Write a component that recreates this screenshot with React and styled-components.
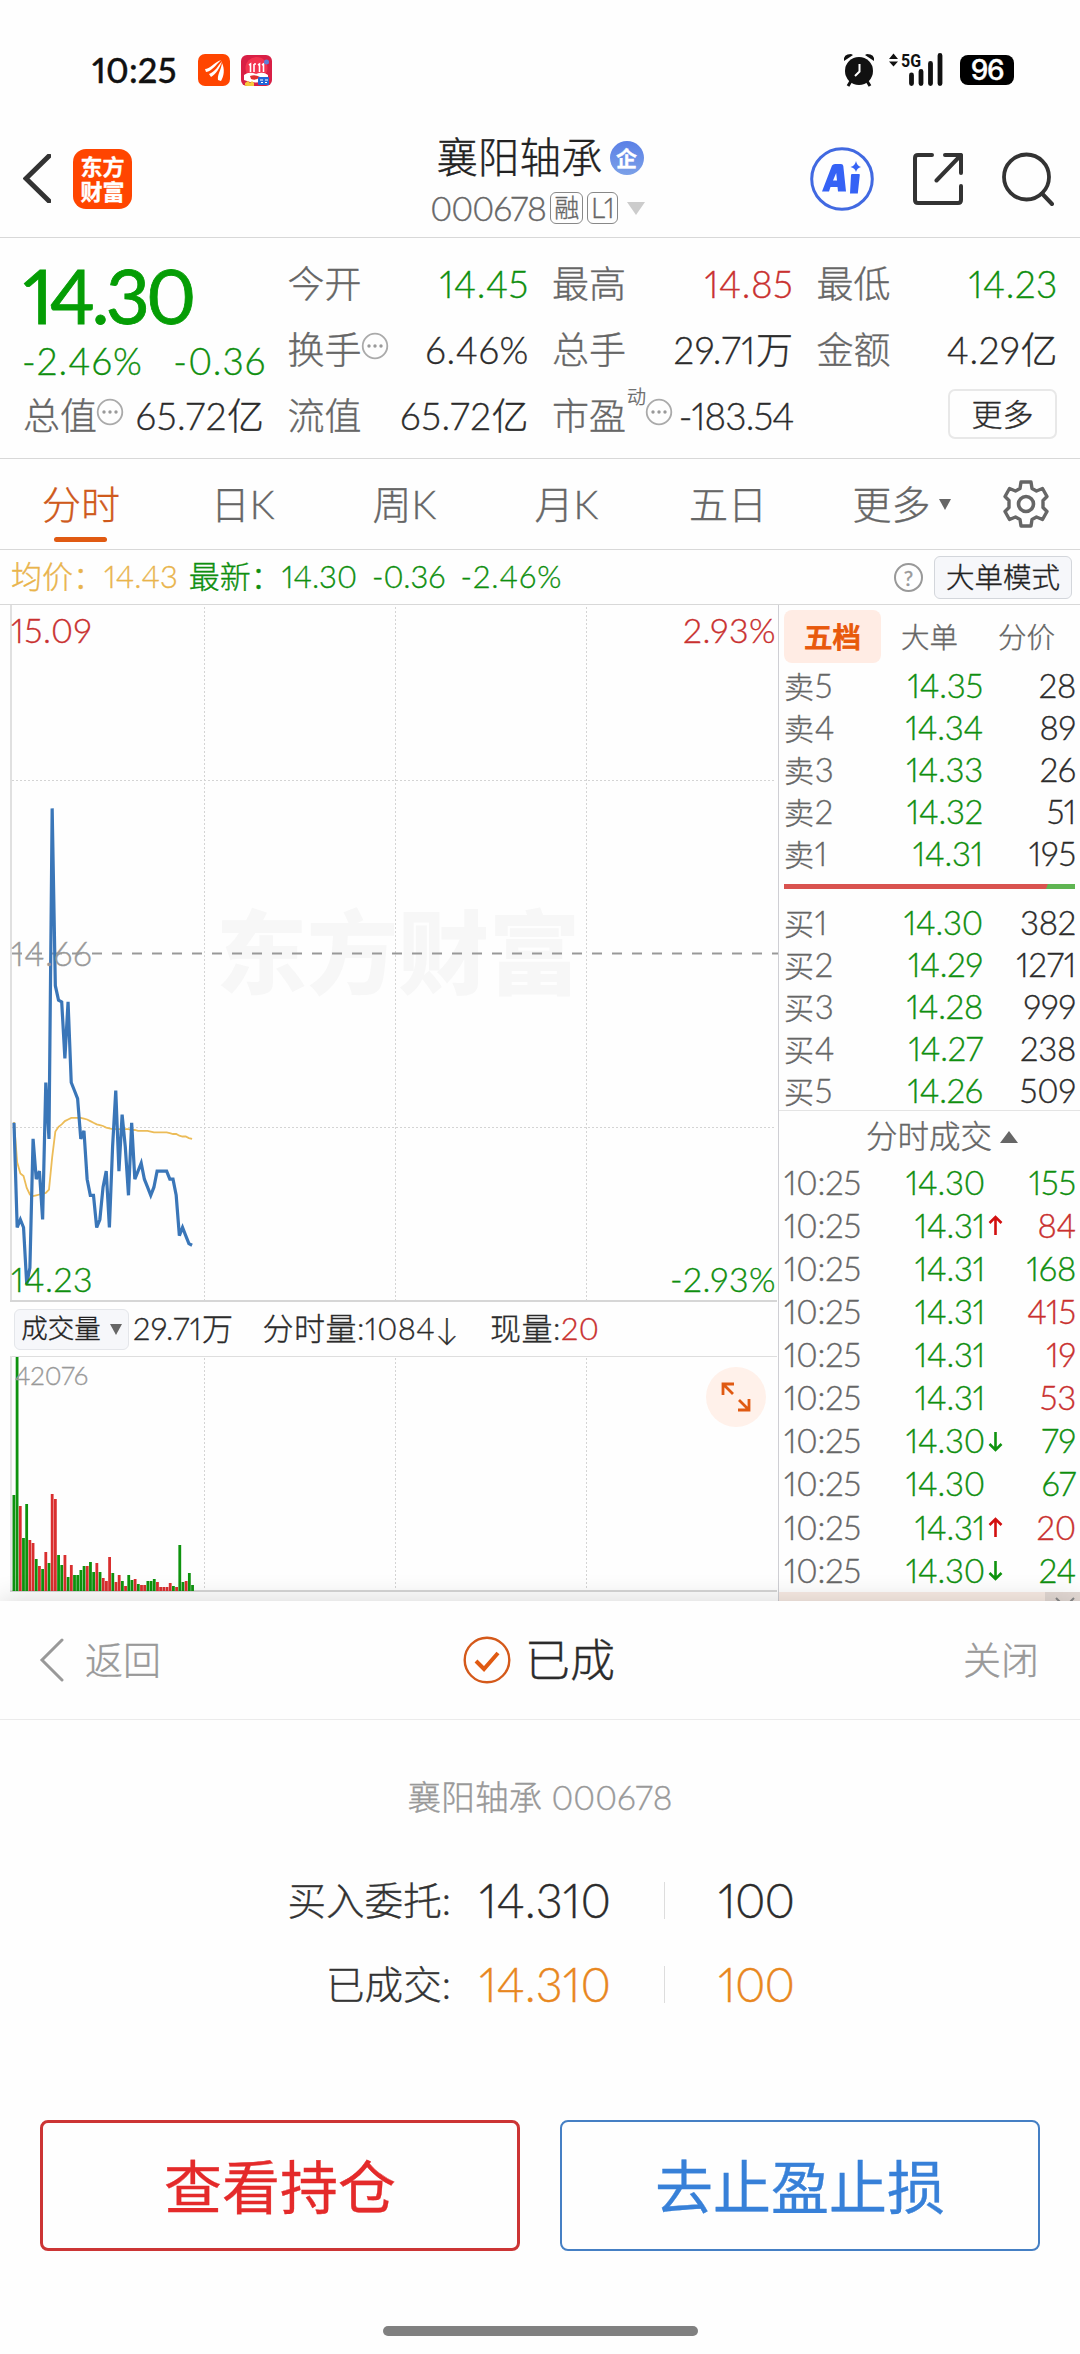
import React from "react";
import styled, { createGlobalStyle } from "styled-components";

const RED = "#c9302f";
const GREEN = "#0f8f0f";
const ORANGE = "#e05a12";
const LINE = "#d8d8d8";

const tones = {
  up: RED,
  down: GREEN,
  dark: "#2b2b2b",
  gray: "#666",
};

const GlobalStyle = createGlobalStyle`
  * {
    box-sizing: border-box;
  }
  body {
    margin: 0;
    background-color: #fefefe;
    font-family: Lato, "Noto Sans CJK SC", sans-serif;
    font-weight: 300;
    font-variant-numeric: proportional-nums;
    -webkit-text-stroke-width: 0.35px;
    color: #2b2b2b;
  }
  svg {
    display: block;
    flex-shrink: 0;
  }
`;

const Screen = styled.div`
  width: 1080px;
  height: 2354px;
  display: flex;
  flex-direction: column;
  overflow: hidden;
  line-height: 1.2;
  white-space: nowrap;
`;

/* status bar */

const StatusBar = styled.div`
  height: 105px;
  padding: 35px 66px 0 92px;
  display: flex;
  justify-content: space-between;
  align-items: flex-start;
`;

const StatusGroup = styled.div`
  height: 70px;
  display: flex;
  align-items: center;
  gap: ${(props) => props.gap}px;
`;

const Clock = styled.span`
  width: 95px;
  font-size: 34.5px;
  font-weight: 500;
  letter-spacing: 0.2px;
  color: #111;
`;

const Battery = styled.div`
  width: 54px;
  height: 30px;
  margin-left: 3px;
  border-radius: 8px;
  background-color: #000;
  color: #fff;
  font: 500 28px/31px Inter, sans-serif;
  letter-spacing: -1.5px;
  text-align: center;
`;

/* header */

const Header = styled.header`
  height: 133px;
  padding: 0 26px 0 23px;
  display: grid;
  grid-template-columns: 1fr auto 1fr;
  align-items: center;
  border-bottom: 1px solid ${LINE};
`;

const HeaderSide = styled.div`
  display: flex;
  align-items: center;
  gap: ${(props) => props.gap}px;
  justify-content: ${(props) => (props.end ? "flex-end" : "flex-start")};
  padding-top: 15px;
`;

const BrandMark = styled.div`
  width: 59px;
  height: 60px;
  padding-top: 5px;
  border-radius: 13px;
  background-color: #ff4500;
  color: #fff;
  font-weight: 700;
  font-size: 22px;
  line-height: 25px;
  text-align: center;
`;

const TitleBlock = styled.div`
  display: flex;
  flex-direction: column;
  align-items: center;
  padding: 17px 0 0 3px;
`;

const TitleRow = styled.div`
  height: 57px;
  display: flex;
  align-items: center;
  gap: 7px;
  font-size: 41.5px;
  color: #222;
`;

const CompanyBadge = styled.span`
  width: 34px;
  height: 34px;
  border-radius: 50%;
  background: linear-gradient(#5b80e6, #7ba0e8);
  color: #fff;
  font-size: 21px;
  font-weight: 700;
  line-height: 33px;
  text-align: center;
`;

const CodeRow = styled.div`
  display: flex;
  align-items: center;
  height: 44px;
  margin-right: 5px;
  gap: 4px;
  font-size: 34px;
  letter-spacing: -1.1px;
  color: #666;
`;

const Tag = styled.span`
  width: ${(props) => props.width}px;
  height: 32px;
  border: 1px solid #888;
  border-radius: 6px;
  font-size: ${(props) => props.size}px;
  line-height: 29px;
  text-align: center;
`;

const Caret = styled.span`
  width: 0;
  height: 0;
  border-style: solid;
  border-width: ${(props) =>
    props.up
      ? `0 ${props.w / 2}px ${props.h}px`
      : `${props.h}px ${props.w / 2}px 0`};
  border-color: ${(props) => props.color} transparent;
  margin-left: ${(props) => props.gap || 0}px;
`;

/* quote summary */

const Quote = styled.section`
  height: 221px;
  padding: 13px 23px 0;
  display: grid;
  grid-template-columns: repeat(4, 1fr);
  grid-template-rows: repeat(3, 66px);
  column-gap: 24px;
  border-bottom: 1px solid ${LINE};
`;

const PriceBlock = styled.div`
  grid-row: span 2;
  color: ${GREEN};
`;

const BigPrice = styled.div`
  height: 88px;
  line-height: 87px;
  font-size: 76.5px;
  font-weight: 400;
  letter-spacing: -3.8px;
  color: #059d05;
  -webkit-text-stroke-width: 0.8px;
`;

const Change = styled.div`
  height: 44px;
  margin: 0 -3px 0 -1px;
  display: flex;
  align-items: center;
  justify-content: space-between;
  font-size: 37px;
  letter-spacing: 1.1px;
`;

const Stat = styled.div`
  display: flex;
  align-items: center;
  font-size: 37px;
  color: #666;
`;

const Value = styled.span`
  margin: 0 -1px 0 auto;
  letter-spacing: ${(props) => (props.tight ? -0.9 : 0.6)}px;
  color: ${(props) => tones[props.tone]};
`;

const Sup = styled.sup`
  align-self: flex-start;
  margin-left: 1px;
  font-size: 19px;
  line-height: 28px;
`;

const MoreButton = styled.button`
  width: 109px;
  height: 50px;
  margin: 6px 0 0 auto;
  align-self: start;
  padding: 0;
  border: 2px solid #e8e8e8;
  border-radius: 7px;
  background: none;
  font: inherit;
  font-size: 31px;
  line-height: 44px;
  color: #2b2b2b;
`;

/* period tabs */

const Tabs = styled.nav`
  height: 91px;
  padding-right: 22px;
  display: grid;
  grid-template-columns: repeat(5, 161.8px) 1fr 64px;
  border-bottom: 1px solid ${LINE};
`;

const Tab = styled.div`
  display: flex;
  flex-direction: column;
  align-items: center;
  padding-top: 22px;
  font-size: 39px;
  color: ${(props) => (props.active ? "#cf5a1c" : "#666")};
  &::after {
    content: "";
    width: 53px;
    height: 5px;
    margin-top: 9px;
    border-radius: 3px;
    background-color: ${(props) => (props.active ? ORANGE : "transparent")};
  }
`;

const TabLabel = styled.span`
  display: flex;
  align-items: center;
`;

const TabIcon = styled.div`
  display: flex;
  justify-content: center;
  padding-top: 21px;
`;

/* average / latest line */

const InfoBar = styled.div`
  height: 55px;
  padding: 0 8px 0 11px;
  display: flex;
  align-items: center;
  border-bottom: 1px solid ${LINE};
  font-size: 31px;
  color: ${GREEN};
`;

const InfoItem = styled.span`
  margin-right: ${(props) => props.gap}px;
  letter-spacing: ${(props) => props.spacing || 0}px;
  color: ${(props) => props.color};
`;

const Help = styled.span`
  width: 29px;
  height: 29px;
  margin: 0 11px 0 auto;
  border: 2px solid #999;
  border-radius: 50%;
  color: #999;
  font-size: 21px;
  font-weight: 400;
  line-height: 25px;
  text-align: center;
`;

const ModeButton = styled.button`
  width: 138px;
  height: 43px;
  padding: 0;
  border: 1px solid #d3d6db;
  border-radius: 6px;
  background-color: #f6f7fa;
  font: inherit;
  font-size: 28.5px;
  line-height: 38px;
  color: #222;
`;

/* chart and order book */

const Main = styled.main`
  height: 996px;
  display: flex;
`;

const ChartColumn = styled.div`
  width: 778px;
`;

const VolumeBar = styled.div`
  height: 54px;
  padding-left: 14px;
  display: flex;
  align-items: center;
  font-size: 31px;
`;

const VolumeButton = styled.button`
  width: 115px;
  height: 41px;
  margin-right: 4px;
  padding: 0;
  display: flex;
  align-items: center;
  justify-content: center;
  border: 1px solid #e4e6ea;
  border-radius: 6px;
  background-color: #f6f7fa;
  font: inherit;
  font-size: 26.5px;
  color: #222;
`;

const VolumeText = styled.span`
  margin-right: ${(props) => props.gap || 0}px;
  letter-spacing: 0.5px;
  color: ${(props) => tones[props.tone || "dark"]};
`;

const VolumeChart = styled.div`
  position: relative;
`;

const ExpandButton = styled.div`
  position: absolute;
  top: 11px;
  right: 12px;
  width: 60px;
  height: 60px;
  padding: 15px;
  border-radius: 50%;
  background-color: #fff1ea;
`;

const Book = styled.aside`
  flex: 1;
  height: 996px;
  display: flex;
  flex-direction: column;
  border-left: 1px solid #cfcfd4;
`;

const BookTabs = styled.div`
  height: 60px;
  flex-shrink: 0;
  padding: 5px 0 0 5px;
  display: flex;
`;

const BookTab = styled.span`
  width: 97px;
  height: 53px;
  border-radius: 8px;
  background-color: ${(props) => (props.active ? "#ffece4" : "transparent")};
  color: ${(props) => (props.active ? "#e8590c" : "#666")};
  font-size: 28.5px;
  font-weight: ${(props) => (props.active ? 500 : 300)};
  -webkit-text-stroke-width: ${(props) => (props.active ? 0.9 : 0.35)}px;
  line-height: 55px;
  text-align: center;
`;

const BookRow = styled.div`
  height: ${(props) => props.height}px;
  flex-shrink: 0;
  padding: 0 4px 0 5px;
  display: flex;
  align-items: center;
  font-size: 33px;
  letter-spacing: -0.2px;
  color: #666;
`;

const SideMark = styled.span`
  margin-right: 1px;
  font-size: 30px;
`;

const Cell = styled.span`
  width: ${(props) => props.width}px;
  margin-left: ${(props) => (props.push ? "auto" : 0)};
  text-align: right;
  color: ${(props) => tones[props.tone]};
`;

const ArrowSlot = styled.span`
  width: 20px;
  padding-left: 3px;
`;

const Ratio = styled.div`
  height: 5px;
  flex-shrink: 0;
  margin: 9px 5px 13px;
  background: linear-gradient(110deg, #d9534f 90%, #5fb552 90.2%);
`;

const TicksTitle = styled.div`
  height: 51px;
  flex-shrink: 0;
  margin-top: -2px;
  padding: 2px 0 0 25px;
  display: flex;
  align-items: center;
  justify-content: center;
  border-top: 1px solid #e4e4e4;
  font-size: 31.5px;
  color: #666;
`;

const Promo = styled.div`
  flex: 1;
  display: flex;
  justify-content: flex-end;
  overflow: hidden;
  background-color: #f8ebe4;
`;

const PromoClose = styled.div`
  width: 35px;
  padding: 5px 0 0 10px;
  background-color: #e3d9d4;
`;

/* order result sheet */

const Sheet = styled.section`
  flex: 1;
  position: relative;
  display: flex;
  flex-direction: column;
  background-color: #fefefe;
  box-shadow: 0 0 26px rgba(0, 0, 0, 0.16);
`;

const SheetHeader = styled.div`
  height: 119px;
  padding: 0 41px 0 39px;
  display: grid;
  grid-template-columns: 1fr auto 1fr;
  align-items: center;
  border-bottom: 1px solid #ebebeb;
  font-size: 38px;
  color: #999;
`;

const SheetSide = styled.div`
  display: flex;
  align-items: center;
  gap: 21px;
  justify-content: ${(props) => (props.end ? "flex-end" : "flex-start")};
`;

const SheetTitle = styled.div`
  display: flex;
  align-items: center;
  gap: 14px;
  font-size: 45px;
  color: #2b2b2b;
`;

const StockName = styled.div`
  margin-top: 57px;
  text-align: center;
  font-size: 33.7px;
  line-height: 40px;
  color: #999;
`;

const OrderLines = styled.div`
  margin-top: 41px;
`;

const OrderLine = styled.div`
  height: 84px;
  display: grid;
  grid-template-columns: 451px 213px 1px 1fr;
  align-items: center;
  font-size: 47px;
  color: ${(props) => props.color};
`;

const OrderLabel = styled.span`
  text-align: right;
  font-size: 38.6px;
  color: #333;
`;

const OrderPrice = styled.span`
  padding-left: 28px;
`;

const OrderSplit = styled.span`
  height: 37px;
  background-color: #ddd;
`;

const OrderCount = styled.span`
  padding-left: 53px;
  letter-spacing: -0.8px;
`;

const Actions = styled.div`
  margin-top: 94px;
  padding: 0 40px;
  display: grid;
  grid-template-columns: 1fr 1fr;
  gap: 40px;
`;

const ActionButton = styled.button`
  height: 131px;
  padding: 3px 0 0;
  border: ${(props) => props.stroke}px solid ${(props) => props.line};
  border-radius: 8px;
  background: none;
  font: inherit;
  font-size: 58px;
  font-weight: 400;
  color: ${(props) => props.color};
`;

const HomeBar = styled.div`
  width: 315px;
  height: 10px;
  margin: 75px auto 0;
  border-radius: 5px;
  background-color: #808080;
`;

const ChartText = styled.text`
  font-size: ${(props) => props.$size || 34}px;
  letter-spacing: ${(props) => (props.$size ? 0 : 0.5)}px;
  fill: ${(props) => props.$color};
  stroke: ${(props) => props.$color};
  stroke-width: 0.35px;
`;

const Watermark = styled.text`
  font-size: 91px;
  font-weight: 900;
  fill: #f7f7f7;
`;

/* data */

const sells = [
  ["卖", 5, "14.35", 28],
  ["卖", 4, "14.34", 89],
  ["卖", 3, "14.33", 26],
  ["卖", 2, "14.32", 51],
  ["卖", 1, "14.31", 195],
];

const buys = [
  ["买", 1, "14.30", 382],
  ["买", 2, "14.29", 1271],
  ["买", 3, "14.28", 999],
  ["买", 4, "14.27", 238],
  ["买", 5, "14.26", 509],
];

const ticks = [
  { price: "14.30", count: 155, tone: "down" },
  { price: "14.31", count: 84, tone: "up", move: "up" },
  { price: "14.31", count: 168, tone: "down" },
  { price: "14.31", count: 415, tone: "up" },
  { price: "14.31", count: 19, tone: "up" },
  { price: "14.31", count: 53, tone: "up" },
  { price: "14.30", count: 79, tone: "down", move: "down" },
  { price: "14.30", count: 67, tone: "down" },
  { price: "14.31", count: 20, tone: "up", move: "up" },
  { price: "14.30", count: 24, tone: "down", move: "down" },
];

// one value per minute since the open
const prices = [
  14.45, 14.32, 14.33, 14.32, 14.25, 14.27, 14.43, 14.38, 14.39, 14.33, 14.5,
  14.43, 14.84, 14.62, 14.602, 14.6, 14.53, 14.6, 14.5, 14.49, 14.48, 14.43,
  14.44, 14.38, 14.36, 14.36, 14.32, 14.33, 14.37, 14.39, 14.32, 14.42, 14.49,
  14.39, 14.46, 14.42, 14.36, 14.45, 14.38, 14.39, 14.4, 14.38, 14.37, 14.36,
  14.37, 14.39, 14.39, 14.39, 14.39, 14.38, 14.38, 14.36, 14.31, 14.32, 14.31,
  14.3, 14.298,
];

const averages = [
  14.451, 14.401, 14.387, 14.384, 14.369, 14.361, 14.359, 14.36, 14.361,
  14.362, 14.363, 14.367, 14.407, 14.439, 14.445, 14.448, 14.452, 14.454,
  14.456, 14.456, 14.456, 14.456, 14.455, 14.454, 14.452, 14.45, 14.448,
  14.447, 14.446, 14.444, 14.443, 14.442, 14.442, 14.442, 14.442, 14.442,
  14.442, 14.441, 14.441, 14.44, 14.44, 14.44, 14.44, 14.439, 14.438, 14.438,
  14.438, 14.438, 14.438, 14.437, 14.436, 14.436, 14.434, 14.433, 14.433,
  14.431, 14.43,
];

const volumes = [
  96, 234, 85, 53, 87, 51, 48, 32, 25, 22, 39, 28, 97, 92, 36, 26, 36, 14, 26,
  16, 16, 21, 25, 25, 29, 19, 28, 19, 13, 10, 34, 18, 9, 16, 10, 5, 16, 11, 12,
  7, 6, 6, 10, 10, 12, 9, 4, 4, 4, 8, 5, 4, 46, 9, 10, 18, 6,
];
const volumeSides = "ggrggrrgrgrgrrggrgrggggrggrgrrrgrrgrggrgrrgggrrrrrgrggrggr";

const minuteX = (i) => 14 + i * 3.18;
const priceY = (price) => 348.5 + (14.66 - price) * 806;
const toPoints = (list) =>
  list.map((price, i) => `${minuteX(i)},${priceY(price).toFixed(1)}`).join(" ");

/* drawings */

const AlarmIcon = () => (
  <svg width="32" height="34" viewBox="0 0 32 34">
    <circle cx="16" cy="18" r="14" fill="#111" />
    <path d="M1 8Q0 1 8 1L10 2Z M31 8Q32 1 24 1L22 2Z" fill="#111" />
    <path d="M8 28L5 33M24 28L27 33" stroke="#111" strokeWidth="3" />
    <path d="M16.5 11V18.5L12 23" fill="none" stroke="#fff" strokeWidth="2" />
  </svg>
);

const SignalIcon = () => (
  <svg width="54" height="40" viewBox="0 -3 54 40">
    <path d="M0 6L4.500 0.500L9 6Z M0 8.500L4.500 13.500L9 8.500Z" fill="#111" />
    <text
      x="12"
      y="13.500"
      fontSize="19"
      fontWeight="700"
      fontFamily="Roboto, sans-serif"
      textLength="20"
      lengthAdjust="spacingAndGlyphs"
      fill="#111"
    >
      5G
    </text>
    <path
      d="M22.500 22V30.500M32 18.500V30.500M41.500 10.500V30.500M51 2.500V30.500"
      stroke="#111"
      strokeWidth="4.8"
      strokeLinecap="round"
    />
  </svg>
);

const LeafAppIcon = () => (
  <svg width="32" height="32" viewBox="0 0 32 32">
    <rect width="32" height="32" rx="7" fill="#ff4500" />
    <path
      d="M7 15C12 15 15 9 23 6C18 11 14 17 8 18Z M11 20C17 18 20 12 24 7C22 14 18 20 13 23Z M20 26C19 21 23 16 24 9C27 15 26 22 23 27Z"
      fill="#fff"
    />
  </svg>
);

const ShopAppIcon = () => (
  <svg width="31" height="31" viewBox="0 0 31 31">
    <defs>
      <clipPath id="shop">
        <rect width="31" height="31" rx="6" />
      </clipPath>
    </defs>
    <g clipPath="url(#shop)">
      <rect width="31" height="31" fill="#d81f45" />
      <circle cx="15.5" cy="13" r="11" fill="#f2334f" />
      <path
        d="M8 10L9.500 9V17M13 9V17M13 9H15M17 10L18.500 9V17M21 10L22.500 9V17"
        fill="none"
        stroke="#fff"
        strokeWidth="1.6"
      />
      <path d="M3 20Q8 16 15 19Q22 16 27 20V25Q15 30 3 25Z" fill="#fff" />
      <path d="M9 21Q14 19 19 22Q15 26 10 24Z" fill="#e0302f" />
      <path d="M4 31V28L7 26L9 28L11 26L13 28V31Z" fill="#f5c93c" />
      <rect x="17" y="22" width="11" height="8" rx="1" fill="#2166d8" />
      <path d="M19 25H22M24 25H27M20 27.500H22M24 27.500H26" stroke="#fff" />
      <circle cx="25.5" cy="7" r="2.5" fill="#5b7fd8" />
    </g>
  </svg>
);

const BackIcon = ({ w, h, color, stroke }) => (
  <svg width={w} height={h} viewBox={`0 0 ${w} ${h}`}>
    <path
      d={`M${w - 2} 2L3 ${h / 2}L${w - 2} ${h - 2}`}
      fill="none"
      stroke={color}
      strokeWidth={stroke}
      strokeLinecap="round"
    />
  </svg>
);

const AiIcon = () => (
  <svg width="64" height="66" viewBox="0 0 64 66">
    <circle cx="32" cy="33" r="30.3" fill="none" stroke="#4169e1" strokeWidth="3" />
    <path
      fill="#3562f5"
      fillRule="evenodd"
      d="M12 45.500L22 19.500Q23 18 25 18H31Q33 18 33.300 20L36 45.500H28L27.500 41H20.500L19 45.500ZM23 34.500H27L26.200 27Z"
    />
    <path d="M42 28H49Q50 28 49.800 29L47.800 47.500H40L41 29Q41.200 28 42 28Z" fill="#3562f5" />
    <path d="M46 15Q47 20 51 21Q47 22 46 26Q45 22 40.500 21Q45 20 46 15Z" fill="#3562f5" />
  </svg>
);

const ShareIcon = () => (
  <svg width="50" height="52" viewBox="0 0 50 52">
    <path
      d="M19 2H5Q2 2 2 5V47Q2 50 5 50H45Q48 50 48 47V33M32 2H48V20M48 2L23.500 27.500"
      fill="none"
      stroke="#333"
      strokeWidth="4"
      strokeLinecap="round"
      strokeLinejoin="round"
    />
  </svg>
);

const SearchIcon = () => (
  <svg width="52" height="54" viewBox="0 0 52 54">
    <circle cx="24.500" cy="25" r="22.500" fill="none" stroke="#333" strokeWidth="3.800" />
    <path d="M40 41.500L50 52" stroke="#333" strokeWidth="4" strokeLinecap="round" />
  </svg>
);

const GearIcon = () => (
  <svg width="46" height="48" viewBox="-23 -24 46 48">
    <path
      d="M-5 -22H5L6 -15.500L10.500 -13L16.500 -15.500L21 -7.500L17 -3.500V3.500L21 7.500L16.500 15.500L10.500 13L6 15.500L5 22H-5L-6 15.500L-10.500 13L-16.500 15.500L-21 7.500L-17 3.500V-3.500L-21 -7.500L-16.500 -15.500L-10.500 -13L-6 -15.500Z"
      fill="none"
      stroke="#666"
      strokeWidth="3.400"
      strokeLinejoin="round"
    />
    <circle r="7.500" fill="none" stroke="#666" strokeWidth="3.600" />
  </svg>
);

const DotsSvg = styled.svg`
  margin: -8px 0 0 -1px;
`;

const DotsIcon = () => (
  <DotsSvg width="28" height="28" viewBox="0 0 28 28">
    <circle cx="14" cy="14" r="12.300" fill="none" stroke="#aaa" strokeWidth="1.800" />
    <circle cx="8" cy="14" r="1.700" fill="#999" />
    <circle cx="14" cy="14" r="1.700" fill="#999" />
    <circle cx="20" cy="14" r="1.700" fill="#999" />
  </DotsSvg>
);

const MoveArrow = ({ move }) => (
  <svg width="15" height="21" viewBox="0 0 15 21">
    <path
      d={move === "up" ? "M7.500 20V2M1.500 8L7.500 2L13.500 8" : "M7.500 1V19M1.500 13L7.500 19L13.500 13"}
      fill="none"
      stroke={move === "up" ? "#d20f0f" : "#0e930e"}
      strokeWidth="2.600"
    />
  </svg>
);

const ExpandIcon = () => (
  <svg width="30" height="30" viewBox="0 0 30 30">
    <path
      d="M2 13V2H13M2 2L12 12M28 17V28H17M28 28L18 18"
      fill="none"
      stroke={ORANGE}
      strokeWidth="2.800"
    />
  </svg>
);

const DoneIcon = () => (
  <svg width="48" height="48" viewBox="0 0 48 48">
    <circle cx="24" cy="24" r="22.300" fill="none" stroke="#d4591a" strokeWidth="2.400" />
    <path d="M13 25L21 33L35 17" fill="none" stroke="#e05a12" strokeWidth="4" />
  </svg>
);

const PriceChart = () => (
  <svg width="778" height="697" viewBox="0 0 778 697">
    <Watermark x="216" y="382">
      东方财富
    </Watermark>
    <g stroke="#d4d4d4" strokeWidth="1" strokeDasharray="2 2">
      <path d="M204.500 2V696M395.500 2V696M586.500 2V696" />
      <path d="M12 175.500H776M12 522.500H776" />
    </g>
    <path d="M11 0V696" stroke="#e0e0e0" strokeWidth="2" />
    <path d="M10 696H777" stroke="#d6d6d6" strokeWidth="2" />
    <path d="M12 348.500H778" stroke="#999" strokeWidth="2" strokeDasharray="10 10" />
    <polyline points={toPoints(averages)} fill="none" stroke="#ecbc58" strokeWidth="1.800" />
    <polyline points={toPoints(prices)} fill="none" stroke="#3a76b8" strokeWidth="3.200" />
    <ChartText x="11" y="38" $color={RED}>
      15.09
    </ChartText>
    <ChartText x="776" y="38" textAnchor="end" $color={RED}>
      2.93%
    </ChartText>
    <ChartText x="11" y="361" $color="#999">
      14.66
    </ChartText>
    <ChartText x="11" y="687" $color={GREEN}>
      14.23
    </ChartText>
    <ChartText x="776" y="687" textAnchor="end" $color={GREEN}>
      -2.93%
    </ChartText>
  </svg>
);

const VolumeBars = () => (
  <svg width="778" height="245" viewBox="0 0 778 245">
    <path d="M10 0.500H777" stroke="#dedede" />
    <path d="M11 0V235" stroke="#e4e4e4" strokeWidth="2" />
    <path
      d="M204.500 2V234M395.500 2V234M586.500 2V234"
      stroke="#d4d4d4"
      strokeDasharray="2 2"
    />
    <path d="M10 235H777" stroke="#d6d6d6" strokeWidth="2" />
    {volumes.map((height, i) => (
      <rect
        key={i}
        x={12.5 + i * 3.19}
        y={235 - height}
        width="2.8"
        height={height}
        fill={volumeSides[i] === "g" ? "#0e930e" : "#d92e2e"}
      />
    ))}
    <ChartText x="15" y="29" $size={26} $color="#999">
      42076
    </ChartText>
  </svg>
);

const OrderRows = ({ rows }) =>
  rows.map(([side, level, price, count]) => (
    <BookRow key={level} height={42}>
      <SideMark>{side}</SideMark>
      {level}
      <Cell push="true" tone="down">
        {price}
      </Cell>
      <Cell width={93} tone="dark">
        {count}
      </Cell>
    </BookRow>
  ));

function App() {
  return (
    <>
      <GlobalStyle />
      <Screen>
        <StatusBar>
          <StatusGroup gap={11}>
            <Clock>10:25</Clock>
            <LeafAppIcon />
            <ShopAppIcon />
          </StatusGroup>
          <StatusGroup gap={14}>
            <AlarmIcon />
            <SignalIcon />
            <Battery>96</Battery>
          </StatusGroup>
        </StatusBar>

        <Header>
          <HeaderSide gap={22}>
            <BackIcon w={28} h={49} color="#333" stroke={5} />
            <BrandMark>
              东方
              <br />
              财富
            </BrandMark>
          </HeaderSide>
          <TitleBlock>
            <TitleRow>
              襄阳轴承<CompanyBadge>企</CompanyBadge>
            </TitleRow>
            <CodeRow>
              000678
              <Tag width={33} size={25}>
                融
              </Tag>
              <Tag width={31} size={28}>
                L1
              </Tag>
              <Caret w={19} h={13} gap={5} color="#ccc" />
            </CodeRow>
          </TitleBlock>
          <HeaderSide end="true" gap={39}>
            <AiIcon />
            <ShareIcon />
            <SearchIcon />
          </HeaderSide>
        </Header>

        <Quote>
          <PriceBlock>
            <BigPrice>14.30</BigPrice>
            <Change>
              <span>-2.46%</span>
              <span>-0.36</span>
            </Change>
          </PriceBlock>
          <Stat>
            今开<Value tone="down">14.45</Value>
          </Stat>
          <Stat>
            最高<Value tone="up">14.85</Value>
          </Stat>
          <Stat>
            最低<Value tone="down">14.23</Value>
          </Stat>
          <Stat>
            换手
            <DotsIcon />
            <Value tone="dark">6.46%</Value>
          </Stat>
          <Stat>
            总手<Value tone="dark">29.71万</Value>
          </Stat>
          <Stat>
            金额<Value tone="dark">4.29亿</Value>
          </Stat>
          <Stat>
            总值
            <DotsIcon />
            <Value tone="dark">65.72亿</Value>
          </Stat>
          <Stat>
            流值<Value tone="dark">65.72亿</Value>
          </Stat>
          <Stat>
            市盈<Sup>动</Sup>
            <DotsIcon />
            <Value tone="dark" tight="true">
              -183.54
            </Value>
          </Stat>
          <MoreButton>更多</MoreButton>
        </Quote>

        <Tabs>
          <Tab active="true">分时</Tab>
          <Tab>日K</Tab>
          <Tab>周K</Tab>
          <Tab>月K</Tab>
          <Tab>五日</Tab>
          <Tab>
            <TabLabel>
              更多
              <Caret w={13} h={11} gap={8} color="#666" />
            </TabLabel>
          </Tab>
          <TabIcon>
            <GearIcon />
          </TabIcon>
        </Tabs>

        <InfoBar>
          <InfoItem color="#e9b44c" gap={11}>
            均价：14.43
          </InfoItem>
          <InfoItem gap={15}>最新：14.30</InfoItem>
          <InfoItem gap={15}>-0.36</InfoItem>
          <InfoItem spacing={1}>-2.46%</InfoItem>
          <Help>?</Help>
          <ModeButton>大单模式</ModeButton>
        </InfoBar>

        <Main>
          <ChartColumn>
            <PriceChart />
            <VolumeBar>
              <VolumeButton>
                成交量
                <Caret w={13} h={11} gap={9} color="#666" />
              </VolumeButton>
              <VolumeText gap={29}>29.71万</VolumeText>
              <VolumeText gap={31}>分时量:1084↓</VolumeText>
              <VolumeText>现量:</VolumeText>
              <VolumeText tone="up">20</VolumeText>
            </VolumeBar>
            <VolumeChart>
              <VolumeBars />
              <ExpandButton>
                <ExpandIcon />
              </ExpandButton>
            </VolumeChart>
          </ChartColumn>

          <Book>
            <BookTabs>
              <BookTab active="true">五档</BookTab>
              <BookTab>大单</BookTab>
              <BookTab>分价</BookTab>
            </BookTabs>
            <OrderRows rows={sells} />
            <Ratio />
            <OrderRows rows={buys} />
            <TicksTitle>
              分时成交
              <Caret up="true" w={18} h={12} gap={8} color="#666" />
            </TicksTitle>
            {ticks.map((tick, index) => (
              <BookRow key={index} height={43.1}>
                <span>10:25</span>
                <Cell push="true" tone="down">
                  {tick.price}
                </Cell>
                <ArrowSlot>{tick.move && <MoveArrow move={tick.move} />}</ArrowSlot>
                <Cell width={71} tone={tick.tone}>
                  {tick.count}
                </Cell>
              </BookRow>
            ))}
            <Promo>
              <PromoClose>
                <svg width="20" height="20" viewBox="0 0 20 20">
                  <path d="M1 1L19 19M19 1L1 19" stroke="#888" strokeWidth="2" />
                </svg>
              </PromoClose>
            </Promo>
          </Book>
        </Main>

        <Sheet>
          <SheetHeader>
            <SheetSide>
              <BackIcon w={25} h={44} color="#999" stroke={3} />
              返回
            </SheetSide>
            <SheetTitle>
              <DoneIcon />
              已成
            </SheetTitle>
            <SheetSide end="true">关闭</SheetSide>
          </SheetHeader>
          <StockName>襄阳轴承 000678</StockName>
          <OrderLines>
            <OrderLine color="#2b2b2b">
              <OrderLabel>买入委托:</OrderLabel>
              <OrderPrice>14.310</OrderPrice>
              <OrderSplit />
              <OrderCount>100</OrderCount>
            </OrderLine>
            <OrderLine color="#e8871e">
              <OrderLabel>已成交:</OrderLabel>
              <OrderPrice>14.310</OrderPrice>
              <OrderSplit />
              <OrderCount>100</OrderCount>
            </OrderLine>
          </OrderLines>
          <Actions>
            <ActionButton line="#cc3535" stroke={3} color="#e42a2a">
              查看持仓
            </ActionButton>
            <ActionButton line="#457fc4" stroke={2} color="#3780d8">
              去止盈止损
            </ActionButton>
          </Actions>
          <HomeBar />
        </Sheet>
      </Screen>
    </>
  );
}

export default App;
